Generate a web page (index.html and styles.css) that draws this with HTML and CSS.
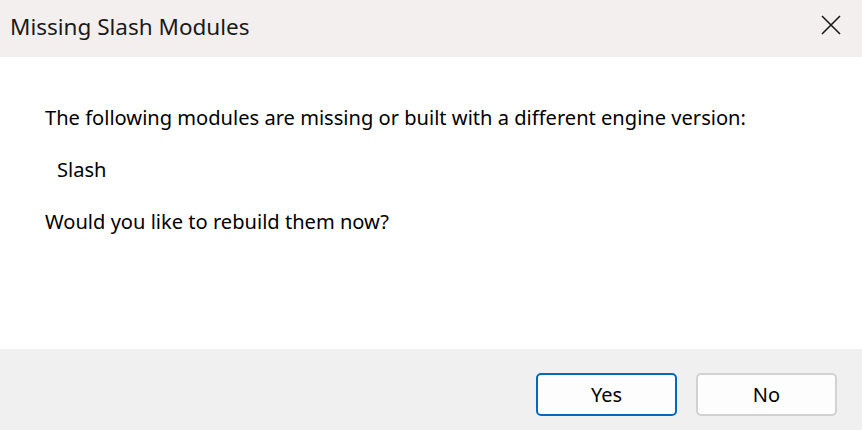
FILE: index.html
```html
<!DOCTYPE html>
<html>
<head>
<meta charset="utf-8">
<link rel="stylesheet" href="styles.css">
</head>
<body>
<div class="dialog">
  <header class="titlebar">
    <span class="title">Missing Slash Modules</span>
    <button class="close" aria-label="Close">
      <svg width="20" height="20" viewBox="0 0 20 20"><path d="M1 1L19 19M19 1L1 19" stroke="#1a1a1a" stroke-width="1.6" fill="none"/></svg>
    </button>
  </header>
  <main class="content">
    <p class="line">The following modules are missing or built with a different engine version:</p>
    <p class="line module">Slash</p>
    <p class="line">Would you like to rebuild them now?</p>
  </main>
  <footer class="footer">
    <button class="btn btn-default">Yes</button>
    <button class="btn">No</button>
  </footer>
</div>
</body>
</html>
```
FILE: styles.css
```css
html, body {
  margin: 0;
  padding: 0;
  width: 862px;
  height: 430px;
  overflow: hidden;
  background: #ffffff;
}
.dialog {
  display: flex;
  flex-direction: column;
  width: 862px;
  height: 430px;
  font-family: "Noto Sans", "Open Sans", sans-serif;
  color: #000;
}
.titlebar {
  height: 57px;
  flex: 0 0 57px;
  background: #f4efef;
  display: flex;
  align-items: center;
  justify-content: space-between;
  padding-left: 10px;
  box-sizing: border-box;
}
.title {
  font-size: 22.5px;
  color: #1a1a1a;
  line-height: 1;
  padding-bottom: 2px;
}
.close {
  width: 62px;
  height: 50px;
  margin-bottom: 7px;
  border: none;
  background: transparent;
  display: flex;
  align-items: center;
  justify-content: center;
  padding: 0;
  margin-right: 0;
}
.content {
  flex: 1;
  background: #ffffff;
  padding: 48px 0 0 45px;
  display: flex;
  flex-direction: column;
  gap: 26px;
}
.line {
  margin: 0;
  font-size: 20.1px;
  line-height: 26px;
  color: #000;
}
.module {
  padding-left: 12px;
}
.footer {
  height: 81px;
  flex: 0 0 81px;
  background: #f0f0f0;
  display: flex;
  justify-content: flex-end;
  align-items: flex-start;
  gap: 19px;
  padding: 24px 25px 0 0;
  box-sizing: border-box;
}
.btn {
  width: 141px;
  height: 43px;
  background: #fdfdfd;
  border: 2px solid #d2d2d2;
  border-radius: 5px;
  font-family: "Noto Sans", "Open Sans", sans-serif;
  font-size: 20px;
  color: #000;
  padding: 0;
}
.btn-default {
  border-color: #0067c0;
}
```
